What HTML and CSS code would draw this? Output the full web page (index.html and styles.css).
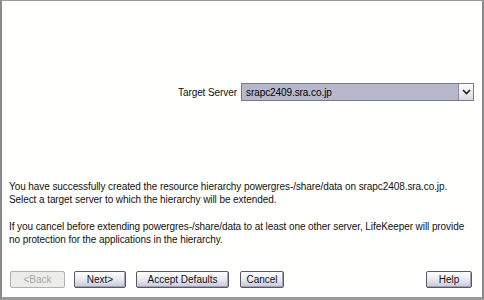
FILE: index.html
```html
<!DOCTYPE html>
<html>
<head>
<meta charset="utf-8">
<link rel="stylesheet" href="styles.css">
</head>
<body>
<div class="frame">
  <div class="panel">
    <div class="target-row">
      <span class="label">Target Server</span>
      <div class="select">
        <span class="value">srapc2409.sra.co.jp</span>
        <span class="arrow">
          <svg width="9" height="6" viewBox="0 0 9 6"><path d="M1 1 L4.5 4.5 L8 1" fill="none" stroke="#202020" stroke-width="1.6"/></svg>
        </span>
      </div>
    </div>
    <div class="message">
      <p>You have successfully created the resource hierarchy powergres-/share/data on srapc2408.sra.co.jp.<br>Select a target server to which the hierarchy will be extended.</p>
      <p>If you cancel before extending powergres-/share/data to at least one other server, LifeKeeper will provide no protection for the applications in the hierarchy.</p>
    </div>
    <div class="buttons">
      <button class="btn btn-back" disabled>&lt;Back</button>
      <button class="btn btn-next">Next&gt;</button>
      <button class="btn btn-accept">Accept Defaults</button>
      <button class="btn btn-cancel">Cancel</button>
      <span class="spacer"></span>
      <button class="btn btn-help">Help</button>
    </div>
  </div>
</div>
</body>
</html>
```
FILE: styles.css
```css
html, body {
  margin: 0;
  padding: 0;
  width: 484px;
  height: 300px;
  overflow: hidden;
  background: #ffffff;
}
.frame {
  box-sizing: border-box;
  width: 484px;
  height: 300px;
  border-left: 2px solid #8a8a8a;
  border-top: 1px solid #9a9a9a;
  border-right: 2px solid #8a8a8a;
  border-bottom: 3px solid #9a9a9a;
  background: #fffffd;
}
.panel {
  display: flex;
  flex-direction: column;
  height: 100%;
  font-family: "Liberation Sans", Arial, sans-serif;
  font-size: 10px;
  letter-spacing: -0.08px;
  color: #111;
}
.target-row {
  display: flex;
  align-items: center;
  justify-content: flex-end;
  margin-top: 82px;
  padding-right: 8px;
}
.label {
  margin-right: 4px;
}
.select {
  box-sizing: border-box;
  width: 233px;
  height: 18px;
  display: flex;
  align-items: center;
  background: #b8b8cc;
  border: 1px solid #7a7a8a;
}
.value {
  flex: 1;
  padding-left: 4px;
  color: #000;
}
.arrow {
  box-sizing: border-box;
  width: 15px;
  height: 16px;
  display: flex;
  align-items: center;
  justify-content: center;
  background: linear-gradient(#ffffff, #d8d8e4);
  border-left: 1px solid #8a8a9a;
}
.message {
  margin-top: 79px;
  padding-left: 7px;
  padding-right: 12px;
  line-height: 13px;
}
.message p {
  margin: 0 0 14px 0;
}
.buttons {
  display: flex;
  align-items: center;
  margin-top: auto;
  margin-bottom: 9px;
  padding-left: 8px;
  padding-right: 10px;
}
.btn {
  box-sizing: border-box;
  height: 17px;
  font-family: "Liberation Sans", Arial, sans-serif;
  font-size: 10px;
  color: #111;
  padding: 0;
  border: 1px solid #5a5a66;
  border-radius: 2px;
  background: linear-gradient(#ffffff, #e6e6ee 55%, #c8c8d8);
  box-shadow: inset -1px -1px 0 #a0a0b4;
}
.btn-back {
  width: 55px;
  color: #a8a8a8;
  border-color: #b0b0b0;
  background: #ececea;
  box-shadow: none;
  margin-right: 9px;
}
.btn-next {
  width: 52px;
  margin-right: 10px;
}
.btn-accept {
  width: 93px;
  margin-right: 11px;
}
.btn-cancel {
  width: 44px;
}
.spacer {
  flex: 1;
}
.btn-help {
  width: 46px;
}
```
